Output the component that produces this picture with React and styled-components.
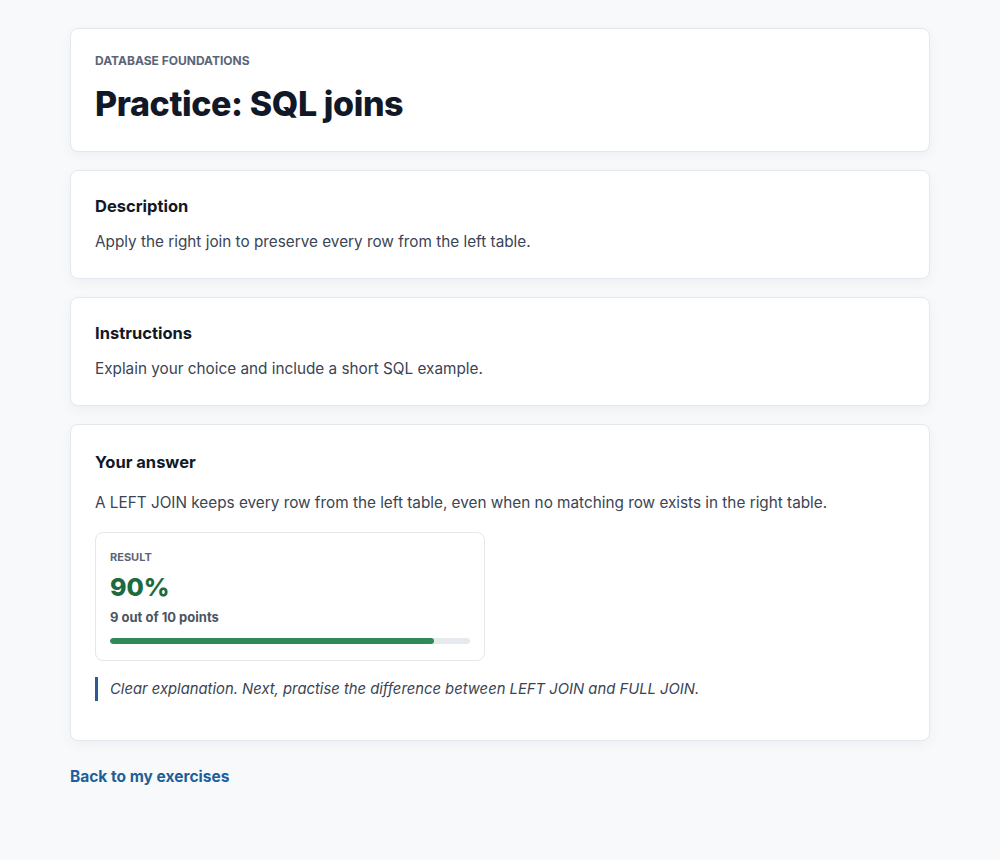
import React from "react";
import styled, { createGlobalStyle } from "styled-components";

const Global = createGlobalStyle`
  html, body { margin: 0; padding: 0; background: #f8f9fb; }
  body { font-family: "Inter", "Noto Sans", sans-serif; color: #1f2937; }
  * { box-sizing: border-box; }
`;

const Page = styled.main`
  width: 860px;
  margin: 0 auto;
  padding: 28px 0 60px;
  display: flex;
  flex-direction: column;
  gap: 18px;
`;

const Card = styled.section`
  background: #fff;
  border: 1px solid #e4e7ec;
  border-radius: 8px;
  box-shadow: 0 4px 14px rgba(15, 23, 42, 0.045);
  padding: ${(p) => p.$top || 24}px 24px ${(p) => p.$bottom || 24}px;
  display: flex;
  flex-direction: column;
`;

const Eyebrow = styled.div`
  font-size: 12px;
  line-height: 16px;
  font-weight: 700;
  text-transform: uppercase;
  color: #5b6578;
`;

const Title = styled.h1`
  margin: 12px 0 0;
  font-size: 34px;
  line-height: 46px;
  font-weight: 800;
  letter-spacing: -0.4px;
  color: #111827;
`;

const Heading = styled.h2`
  margin: 0;
  font-size: 16.5px;
  line-height: 22px;
  font-weight: 700;
  color: #111827;
`;

const Text = styled.p`
  margin: ${(p) => p.$top || 13}px 0 0;
  font-size: 15.3px;
  line-height: 24px;
  color: #3a4454;
`;

const Result = styled.div`
  margin-top: 17px;
  width: 390px;
  border: 1px solid #e4e7ec;
  border-radius: 8px;
  padding: 15px 14px 16px;
  display: flex;
  flex-direction: column;
`;

const ResultLabel = styled.div`
  font-size: 11px;
  line-height: 18px;
  font-weight: 700;
  color: #5b6578;
  text-transform: uppercase;
`;

const Score = styled.div`
  margin-top: 6px;
  font-size: 25px;
  line-height: 30px;
  font-weight: 800;
  color: #1c6b3e;
`;

const Points = styled.div`
  margin-top: 6px;
  font-size: 13px;
  line-height: 18px;
  font-weight: 700;
  color: #4b5563;
`;

const Track = styled.div`
  margin-top: 12px;
  height: 6px;
  border-radius: 3px;
  background: #e6e9ee;
  overflow: hidden;
`;

const Fill = styled.div`
  height: 100%;
  border-radius: 3px;
  background: #2e8a58;
`;

const Feedback = styled.blockquote`
  margin: 16px 0 0;
  padding-left: 12px;
  border-left: 3px solid #2c5d92;
  font-size: 14.8px;
  line-height: 24px;
  font-style: italic;
  color: #3a4454;
`;

const BackLink = styled.a`
  margin-top: 7px;
  font-size: 15.5px;
  line-height: 22px;
  font-weight: 700;
  color: #1f5f99;
  text-decoration: none;
  align-self: flex-start;
`;

export default function App() {
  const pct = 90;
  return (
    <>
      <Global />
      <Page>
        <Card>
          <Eyebrow>Database foundations</Eyebrow>
          <Title>Practice: SQL joins</Title>
        </Card>
        <Card>
          <Heading>Description</Heading>
          <Text>Apply the right join to preserve every row from the left table.</Text>
        </Card>
        <Card>
          <Heading>Instructions</Heading>
          <Text>Explain your choice and include a short SQL example.</Text>
        </Card>
        <Card $top={26} $bottom={39}>
          <Heading>Your answer</Heading>
          <Text $top={18}>
            A LEFT JOIN keeps every row from the left table, even when no matching row exists in the right table.
          </Text>
          <Result>
            <ResultLabel>Result</ResultLabel>
            <Score>{pct}%</Score>
            <Points>9 out of 10 points</Points>
            <Track>
              <Fill style={{ width: `${pct}%` }} />
            </Track>
          </Result>
          <Feedback>
            Clear explanation. Next, practise the difference between LEFT JOIN and FULL JOIN.
          </Feedback>
        </Card>
        <BackLink href="#">Back to my exercises</BackLink>
      </Page>
    </>
  );
}
